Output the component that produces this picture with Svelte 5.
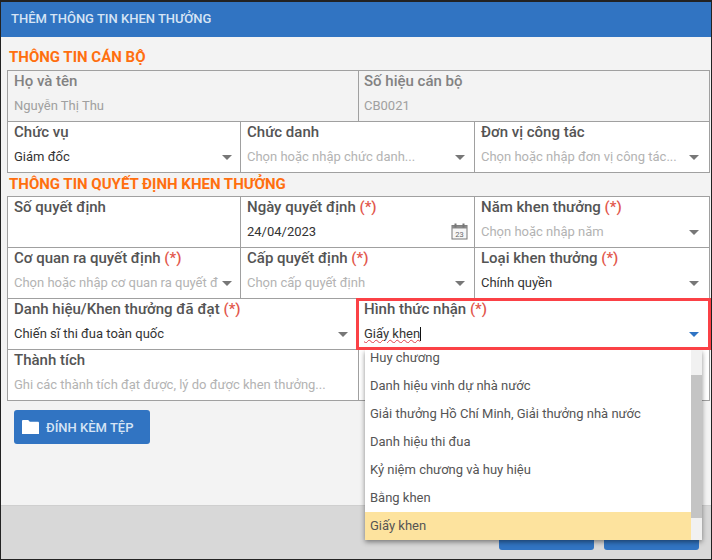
<script>
	const options = [
		'Huy chương',
		'Danh hiệu vinh dự nhà nước',
		'Giải thưởng Hồ Chí Minh, Giải thưởng nhà nước',
		'Danh hiệu thi đua',
		'Kỷ niệm chương và huy hiệu',
		'Bằng khen',
		'Giấy khen'
	];
</script>

<div class="dialog">
	<header class="title">THÊM THÔNG TIN KHEN THƯỞNG</header>

	<main class="content">
		<h2 class="first">THÔNG TIN CÁN BỘ</h2>
		<section class="table">
			<div class="cell half readonly">
				<div class="label">Họ và tên</div>
				<div class="value">Nguyễn Thị Thu</div>
			</div>
			<div class="cell half readonly right">
				<div class="label">Số hiệu cán bộ</div>
				<div class="value">CB0021</div>
			</div>
			<div class="cell">
				<div class="label">Chức vụ</div>
				<div class="value filled">Giám đốc<i class="arrow"></i></div>
			</div>
			<div class="cell mid">
				<div class="label">Chức danh</div>
				<div class="value">Chọn hoặc nhập chức danh...<i class="arrow"></i></div>
			</div>
			<div class="cell last">
				<div class="label">Đơn vị công tác</div>
				<div class="value">Chọn hoặc nhập đơn vị công tác...<i class="arrow"></i></div>
			</div>
		</section>

		<h2>THÔNG TIN QUYẾT ĐỊNH KHEN THƯỞNG</h2>
		<section class="table">
			<div class="cell">
				<div class="label">Số quyết định</div>
				<div class="value"></div>
			</div>
			<div class="cell mid">
				<div class="label">Ngày quyết định <span class="req">(*)</span></div>
				<div class="value filled">
					24/04/2023
					<svg class="calendar" width="17" height="17" viewBox="0 0 17 17">
						<rect x="1" y="2.500" width="15" height="13.500" fill="#f6f6f6" stroke="#777" />
						<rect x="1" y="2.500" width="15" height="3" fill="#8a8a8a" />
						<rect x="3.500" y="0.500" width="2" height="4" fill="#777" />
						<rect x="11.500" y="0.500" width="2" height="4" fill="#777" />
						<text x="8.500" y="14" font-size="7.500" text-anchor="middle" fill="#666" font-family="Roboto">23</text>
					</svg>
				</div>
			</div>
			<div class="cell last">
				<div class="label">Năm khen thưởng <span class="req">(*)</span></div>
				<div class="value">Chọn hoặc nhập năm<i class="arrow"></i></div>
			</div>
			<div class="cell">
				<div class="label">Cơ quan ra quyết định <span class="req">(*)</span></div>
				<div class="value">Chọn hoặc nhập cơ quan ra quyết đ<i class="arrow"></i></div>
			</div>
			<div class="cell mid">
				<div class="label">Cấp quyết định <span class="req">(*)</span></div>
				<div class="value">Chọn cấp quyết định<i class="arrow"></i></div>
			</div>
			<div class="cell last">
				<div class="label">Loại khen thưởng <span class="req">(*)</span></div>
				<div class="value filled">Chính quyền<i class="arrow"></i></div>
			</div>
			<div class="cell half last">
				<div class="label">Danh hiệu/Khen thưởng đã đạt <span class="req">(*)</span></div>
				<div class="value filled">Chiến sĩ thi đua toàn quốc<i class="arrow"></i></div>
			</div>
			<div class="cell half right last focused">
				<div class="label">Hình thức nhận <span class="req">(*)</span></div>
				<div class="value filled"><span class="typed">Giấy khen</span><span class="caret"></span><i class="arrow open"></i></div>

				<div class="dropdown">
					<ul>
						{#each options as option, i}
							<li class:selected={i === options.length - 1}>{option}</li>
						{/each}
					</ul>
					<div class="scrollbar"><div class="thumb"></div></div>
				</div>
			</div>
			<div class="cell half">
				<div class="label">Thành tích</div>
				<div class="value">Ghi các thành tích đạt được, lý do được khen thưởng...</div>
			</div>
			<div class="cell half"></div>
		</section>

		<button class="attach">
			<svg width="17" height="14" viewBox="0 0 17 14">
				<path d="M0 1.200C0 .5.5 0 1.200 0h5l1.600 1.800h8C16.500 1.800 17 2.300 17 3v11H0z" fill="#fff" />
			</svg>
			ĐÍNH KÈM TỆP
		</button>
	</main>

	<footer class="actions">
		<button class="action"></button>
		<button class="action"></button>
	</footer>
</div>

<style>
	:global(body) {
		margin: 0;
		background: #222;
	}

	.dialog {
		width: 710px;
		height: 557px;
		margin: 2px 1px 1px 1px;
		display: flex;
		flex-direction: column;
		background: #f3f3f3;
		font-family: Roboto, sans-serif;
		overflow: hidden;
	}

	.title {
		height: 35px;
		flex: none;
		box-sizing: border-box;
		padding: 8px 0 0 10px;
		background: #3174c2;
		color: #d6e4f5;
		font-size: 13px;
		line-height: 17px;
		font-weight: 500;
	}

	.content {
		flex: 1;
		padding: 0 1px 0 6px;
	}

	h2 {
		margin: 0;
		height: 23px;
		padding-left: 2px;
		color: #ff6f0f;
		font-size: 15px;
		line-height: 23px;
		font-weight: 700;
	}

	h2.first {
		height: 33px;
		line-height: 41px;
	}

	.table {
		display: grid;
		grid-template-columns: 233px 118px 116px 235px;
		border-top: 1px solid #a0a0a0;
		border-left: 1px solid #a0a0a0;
		background: #fff;
	}

	.cell {
		position: relative;
		box-sizing: border-box;
		height: 51px;
		padding: 1px 6px 0;
		border-right: 1px solid #a0a0a0;
		border-bottom: 1px solid #a0a0a0;
		min-width: 0;
	}

	.half,
	.mid {
		grid-column: span 2;
	}

	.right {
		padding-left: 5px;
	}

	.readonly {
		background: #f3f3f3;
	}

	.label {
		color: #545454;
		font-size: 15px;
		line-height: 18px;
		font-weight: 500;
	}

	.readonly .label {
		color: #828282;
	}

	.req {
		color: #e2574c;
	}

	.value {
		position: relative;
		margin-top: 7px;
		height: 18px;
		color: #b3b3b3;
		font-size: 13px;
		line-height: 18px;
		white-space: nowrap;
		overflow: hidden;
	}

	.readonly .value {
		color: #a0a0a0;
	}

	.value.filled {
		color: #333;
	}

	.arrow {
		position: absolute;
		right: 2px;
		top: 7px;
		width: 0;
		height: 0;
		border-left: 5px solid transparent;
		border-right: 5px solid transparent;
		border-top: 5px solid #777;
	}

	.mid .arrow {
		right: 3px;
	}

	.last .arrow {
		right: 4px;
	}

	.arrow.open {
		border-top-color: #2f74c4;
	}

	.calendar {
		position: absolute;
		right: 0;
		top: 0;
	}

	.typed {
		text-decoration: underline wavy #e0404a 1px;
		text-underline-offset: 1px;
	}

	.caret {
		display: inline-block;
		width: 1px;
		height: 14px;
		vertical-align: -3px;
		background: #111;
	}

	.focused {
		z-index: 2;
	}

	/* annotation box drawn over the field and the top of the list */
	.focused::after {
		content: '';
		position: absolute;
		top: -1px;
		left: -3px;
		right: -2px;
		bottom: -1px;
		border: 3px solid #fb4146;
		pointer-events: none;
	}

	.dropdown {
		position: absolute;
		left: 6px;
		top: 51px;
		width: 337px;
		height: 190px;
		background: #fff;
		box-shadow: 0 2px 5px rgba(0, 0, 0, 0.45);
		overflow: hidden;
	}

	ul {
		margin: 0 11px 0 0;
		padding: 0;
		list-style: none;
	}

	li {
		box-sizing: border-box;
		height: 28px;
		padding: 0 5px;
		color: #555;
		font-size: 13px;
		line-height: 28px;
	}

	li:first-child {
		height: 22px;
		line-height: 16px;
	}

	li.selected {
		background: #fde39e;
	}

	.scrollbar {
		position: absolute;
		right: 0;
		top: 0;
		bottom: 0;
		width: 11px;
		background: #f1f1f1;
	}

	.thumb {
		margin-top: 25px;
		height: 143px;
		background: #c4c4c4;
	}

	.attach {
		display: flex;
		align-items: center;
		gap: 7px;
		margin: 9px 0 0 7px;
		width: 136px;
		height: 34px;
		padding: 0 0 0 8px;
		border: none;
		border-radius: 3px;
		background: #3174c2;
		color: #d6e4f5;
		font-family: inherit;
		font-size: 13px;
		font-weight: 500;
	}

	.actions {
		height: 54px;
		flex: none;
		box-sizing: border-box;
		display: flex;
		justify-content: flex-end;
		gap: 10px;
		padding: 0 12px 9px 0;
		align-items: flex-end;
		background: #d8d8d8;
		border-top: 1px solid #cfcfcf;
	}

	.action {
		width: 95px;
		height: 30px;
		border: none;
		border-radius: 3px;
		background: #3174c2;
	}
</style>
